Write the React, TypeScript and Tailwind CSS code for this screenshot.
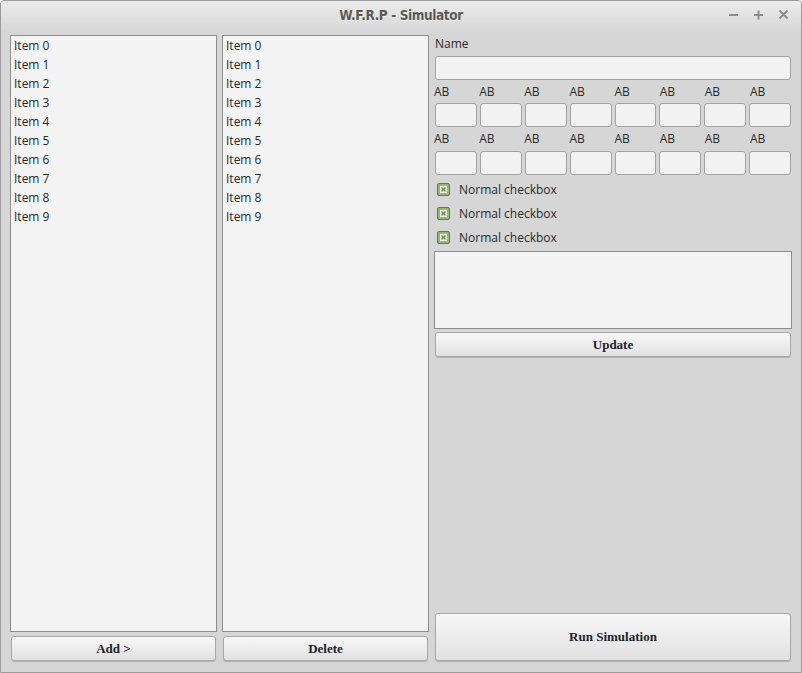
const items = Array.from({ length: 10 }, (_, i) => `Item ${i}`);
const cols = Array.from({ length: 8 }, (_, i) => i);

const sans = "font-['Open_Sans','Noto_Sans',sans-serif]";
const serif = "font-['Liberation_Serif',serif]";
const btn =
  "flex items-center justify-center rounded-[3px] border border-[#a9a9a9] bg-gradient-to-b from-[#f7f7f7] to-[#e1e1e1] shadow-[0_1px_1px_rgba(0,0,0,0.18)] text-[13px] font-bold text-[#222230] " +
  serif;
const field = "h-[24px] rounded-[3px] border border-[#a3a3a3] bg-[#f2f2f2]";

function ListBox() {
  return (
    <div className="flex-1 border border-[#8e8e8e] bg-[#f3f3f3] pl-[3px]">
      {items.map((it) => (
        <div key={it} className={`h-[19px] text-[12px] leading-[19px] text-[#2a2a2a] ${sans}`}>
          {it}
        </div>
      ))}
    </div>
  );
}

function Check() {
  return (
    <div className="flex h-[24px] items-center pl-[3px] pt-[1px]">
      <span className="flex h-[13px] w-[13px] items-center justify-center rounded-[2px] border border-[#5f7c45] bg-[#95b774]">
        <svg width="7" height="7" viewBox="0 0 7 7">
          <rect x="0" y="0" width="7" height="7" fill="#eef4e6" />
          <path d="M1.5 1.5 L5.5 5.5 M5.5 1.5 L1.5 5.5" stroke="#6a8a4c" strokeWidth="1.4" />
        </svg>
      </span>
      <span className={`ml-[9px] text-[12px] text-[#2a2a2a] ${sans}`}>Normal checkbox</span>
    </div>
  );
}

function AbRow({ labelH }: { labelH: string }) {
  return (
    <div>
      <div className={`grid grid-cols-8 gap-[3px] ${labelH}`}>
        {cols.map((c) => (
          <div key={c} className={`pt-[3px] text-[12px] text-[#2a2a2a] ${sans}`}>
            AB
          </div>
        ))}
      </div>
      <div className="grid grid-cols-8 gap-[3px] pl-px pr-px">
        {cols.map((c) => (
          <div key={c} className={field} />
        ))}
      </div>
    </div>
  );
}

export default function App() {
  return (
    <div className="flex h-[673px] w-[802px] flex-col overflow-hidden rounded-t-[4px] border border-[#9c9c9c] bg-[#d6d6d6]">
      <div className="relative flex h-[29px] items-center justify-center bg-gradient-to-b from-[#ececec] to-[#d8d8d8]">
        <span className="font-['DejaVu_Sans_Condensed','DejaVu_Sans',sans-serif] text-[13.5px] font-bold tracking-[-0.4px] text-[#5a5a5a] [text-shadow:0_1px_0_rgba(255,255,255,0.6)]">
          W.F.R.P - Simulator
        </span>
        <div className="absolute right-[12px] top-[7px] flex gap-[14px] text-[#8c8c8c]">
          <svg width="11" height="13" viewBox="0 0 11 13">
            <path d="M1 7 H10" stroke="#8c8c8c" strokeWidth="2" />
          </svg>
          <svg width="11" height="13" viewBox="0 0 11 13">
            <path d="M1 7 H10 M5.5 2.5 V11.5" stroke="#8c8c8c" strokeWidth="2" />
          </svg>
          <svg width="11" height="13" viewBox="0 0 11 13">
            <path d="M1.5 2.5 L9.5 10.5 M9.5 2.5 L1.5 10.5" stroke="#8c8c8c" strokeWidth="2" />
          </svg>
        </div>
      </div>

      <div className="flex flex-1 gap-[5px] pt-[5px] pr-[9px] pb-[11px] pl-[9px]">
        <div className="flex w-[207px] flex-col gap-[4px]">
          <ListBox />
          <div className={`mx-px h-[25px] ${btn}`}>Add &gt;</div>
        </div>
        <div className="flex w-[207px] flex-col gap-[4px]">
          <ListBox />
          <div className={`mx-px h-[25px] ${btn}`}>Delete</div>
        </div>

        <div className="flex flex-1 flex-col">
          <div className={`h-[21px] pl-px text-[12px] text-[#2a2a2a] ${sans}`}>Name</div>
          <div className={`mx-px ${field}`} />
          <AbRow labelH="h-[23px]" />
          <AbRow labelH="h-[24px]" />
          <div className="mt-[2px]">
            <Check />
            <Check />
            <Check />
          </div>
          <div className="mt-[2px] h-[78px] border border-[#8e8e8e] bg-[#f3f3f3]" />
          <div className={`mx-px mt-[3px] h-[25px] ${btn}`}>Update</div>
          <div className="flex-1" />
          <div className={`mx-px h-[48px] ${btn}`}>Run Simulation</div>
        </div>
      </div>
    </div>
  );
}
